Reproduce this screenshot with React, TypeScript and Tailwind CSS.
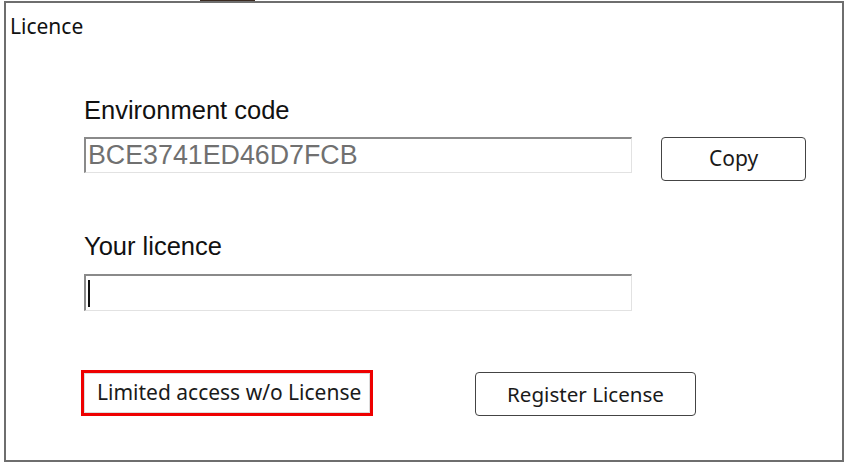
import React from "react";

const segoe = { fontFamily: '"Noto Sans", "Open Sans", sans-serif' };
const arial = { fontFamily: '"Liberation Sans", Arial, sans-serif' };

export default function App() {
  return (
    <div className="w-[848px] h-[465px] bg-white overflow-hidden">
      <div className="h-[1px] flex">
        <div className="ml-[200px] w-[55px] h-[1px] bg-[#3a2a20]" />
      </div>
      <div className="ml-[4px] w-[840px] h-[461px] border-2 border-[#6e6e6e] flex flex-col">
        <div className="ml-[4px] mt-[11px] text-[21px] leading-[25px] text-[#111]" style={segoe}>
          Licence
        </div>
        <div className="pl-[78px] flex flex-col">
          <div className="mt-[56px] text-[25.5px] leading-[30px] text-[#111]" style={arial}>
            Environment code
          </div>
          <div className="mt-[12px] flex items-start">
            <div className="w-[548px] h-[36px] border-t-2 border-l-2 border-[#8a8a8a] border-r border-b border-r-[#e2e2e2] border-b-[#e2e2e2] flex items-center pl-[2px] text-[26.8px] text-[#707070]" style={arial}>
              BCE3741ED46D7FCB
            </div>
            <button className="ml-[29px] w-[145px] h-[44px] border-[1.5px] border-[#444] rounded-[4px] bg-white text-[21px] text-[#1a1a1a] flex items-center justify-center" style={segoe}>
              Copy
            </button>
          </div>
          <div className="mt-[50px] text-[25.5px] leading-[30px] text-[#111]" style={arial}>
            Your licence
          </div>
          <div className="mt-[13px] w-[548px] h-[37px] border-t-2 border-l-2 border-[#8a8a8a] border-r border-b border-r-[#e2e2e2] border-b-[#e2e2e2] flex items-center pl-[2px]">
            <div className="w-[2px] h-[27px] bg-[#111]" />
          </div>
          <div className="mt-[59px] flex items-start">
            <div className="-ml-[3px] w-[292px] h-[46px] border-[3px] border-[#ee0000] flex">
              <div className="flex-1 border border-[#dcdcdc] flex items-center pl-[12px] text-[21px] text-[#1a1a1a] whitespace-nowrap" style={segoe}>
                Limited access w/o License
              </div>
            </div>
            <button className="ml-[102px] mt-[2px] w-[221px] h-[44px] border-[1.5px] border-[#444] rounded-[4px] bg-white text-[20.6px] text-[#1a1a1a] flex items-center justify-center" style={segoe}>
              Register License
            </button>
          </div>
        </div>
      </div>
    </div>
  );
}
